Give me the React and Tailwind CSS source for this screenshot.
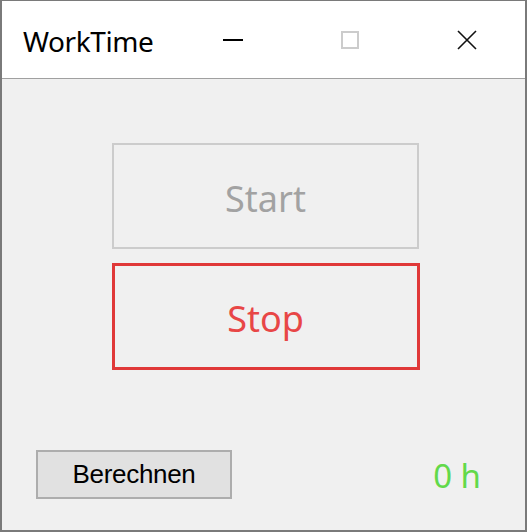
import React from "react";

export default function App() {
  return (
    <div className="w-[527px] h-[532px] flex flex-col border-x-2 border-b-2 border-t border-[#7a7a7a] bg-[#f0f0f0] font-['Noto_Sans',sans-serif]">
      {/* Title bar */}
      <div className="h-[78px] shrink-0 flex items-center bg-white border-b border-[#a0a0a0]">
        <span className="ml-[21px] mt-[3px] text-[28px] text-black tracking-[-0.4px]">WorkTime</span>
        <div className="ml-auto flex items-center">
          <div className="w-[117px] flex justify-center">
            <div className="w-[20px] h-[2px] bg-black" />
          </div>
          <div className="w-[117px] flex justify-center">
            <div className="w-[18px] h-[18px] border-2 border-[#cccccc]" />
          </div>
          <div className="w-[117px] flex justify-center">
            <svg width="20" height="20" viewBox="0 0 20 20">
              <path d="M1 1 L19 19 M19 1 L1 19" stroke="#111" strokeWidth="1.6" />
            </svg>
          </div>
        </div>
      </div>

      {/* Body */}
      <div className="flex-1 flex flex-col">
        <div className="flex flex-col items-center gap-[14px] mt-[64px] pl-[4px]">
          <button className="w-[307px] h-[106px] pt-[5px] border-2 border-[#cccccc] text-[36px] text-[#a2a2a2]">
            Start
          </button>
          <button className="w-[308px] h-[107px] pt-[5px] border-[3px] border-[#e03838] text-[36px] text-[#e84646]">
            Stop
          </button>
        </div>
        <div className="mt-auto mb-[30px] flex items-center pl-[34px] pr-[44px]">
          <button className="w-[196px] h-[49px] border-2 border-[#adadad] bg-[#e1e1e1] font-['Liberation_Sans',sans-serif] text-[26px] text-black tracking-[-0.3px]">
            Berechnen
          </button>
          <span className="ml-auto mt-[2px] text-[33px] text-[#62d94a]">0 h</span>
        </div>
      </div>
    </div>
  );
}
